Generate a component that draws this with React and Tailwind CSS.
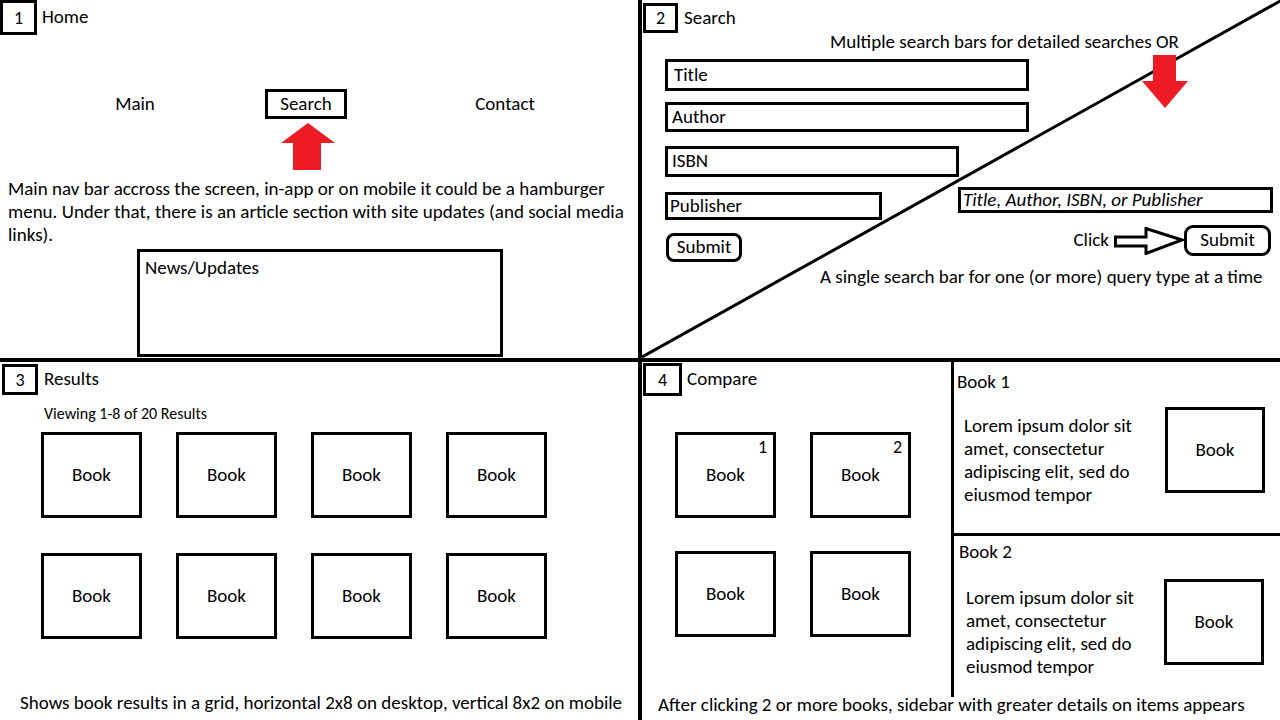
import React from "react";

function NumBox({ children, className }) {
  return (
    <div className={"border-[3px] border-black flex items-center justify-center text-[18px] leading-none " + className}>
      {children}
    </div>
  );
}

function Book({ label, num }) {
  return (
    <div className="relative w-[101px] h-[86px] border-[3px] border-black flex items-center justify-center text-[19px]">
      {label}
      {num && <span className="absolute right-[6px] top-[1px] text-[18px] leading-[22px]">{num}</span>}
    </div>
  );
}

function TopLeft() {
  return (
    <div className="w-[638px] h-[358px] flex flex-col shrink-0">
      <div className="flex items-center">
        <NumBox className="w-[37px] h-[35px]">1</NumBox>
        <span className="ml-[5px] text-[19px]">Home</span>
      </div>
      <div className="flex items-center mt-[54px] h-[30px] text-[19px]">
        <div className="ml-[95px] w-[80px] text-center">Main</div>
        <div className="ml-[90px] w-[82px] h-[30px] border-[3px] border-black flex items-center justify-center">Search</div>
        <div className="ml-[118px] w-[80px] text-center">Contact</div>
      </div>
      <svg className="ml-[281px] mt-[4px]" width="54" height="47" viewBox="0 0 54 47">
        <polygon points="27,0 54,20 40,20 40,47 12,47 12,20 0,20" fill="#ed1c24" />
      </svg>
      <p className="ml-[8px] mt-[7px] text-[19px] leading-[23px] whitespace-nowrap">
        Main nav bar accross the screen, in-app or on mobile it could be a hamburger
        <br />
        menu. Under that, there is an article section with site updates (and social media
        <br />
        links).
      </p>
      <div className="ml-[137px] mt-[3px] w-[366px] h-[108px] border-[3px] border-black px-[5px] pt-[4px] text-[19px] leading-[23px]">
        News/Updates
      </div>
    </div>
  );
}

function TopRight() {
  return (
    <div className="relative flex-1 h-[358px] flex flex-col">
      <svg className="absolute inset-0" width="638" height="358" viewBox="0 0 638 358">
        <line x1="0" y1="357" x2="640" y2="0" stroke="#000" strokeWidth="3" />
        <polygon points="11,0 34,0 34,26 46,26 23,53 0,26 11,26" fill="#ed1c24" transform="translate(500,55)" />
      </svg>
      <div className="relative flex items-center pt-[3px]">
        <NumBox className="ml-[1px] w-[35px] h-[30px]">2</NumBox>
        <span className="ml-[6px] text-[19px]">Search</span>
      </div>
      <div className="relative ml-[188px] -mt-[1px] text-[19px] leading-[20px] whitespace-nowrap">
        Multiple search bars for detailed searches OR
      </div>
      <div className="relative ml-[23px] mt-[7px] w-[364px] h-[32px] border-[3px] border-black bg-white pl-[6px] flex items-center text-[19px]">Title</div>
      <div className="relative ml-[23px] mt-[11px] w-[364px] h-[30px] border-[3px] border-black bg-white pl-[4px] flex items-center text-[19px]">Author</div>
      <div className="relative ml-[23px] mt-[14px] w-[294px] h-[31px] border-[3px] border-black bg-white pl-[4px] flex items-center text-[19px]">ISBN</div>
      <div className="relative flex mt-[10px]">
        <div className="ml-[23px] w-[293px] flex flex-col items-start">
          <div className="mt-[5px] w-[217px] h-[28px] border-[3px] border-black bg-white pl-[2px] flex items-center text-[19px]">Publisher</div>
          <div className="mt-[13px] ml-[1px] w-[76px] h-[29px] border-[3px] border-black rounded-[8px] bg-white flex items-center justify-center text-[19px]">Submit</div>
        </div>
        <div className="w-[315px] flex flex-col">
          <div className="w-[315px] h-[26px] border-[3px] border-black bg-white pl-[2px] flex items-center text-[19px] italic whitespace-nowrap">
            Title, Author, ISBN, or Publisher
          </div>
          <div className="flex items-center justify-end mt-[12px] mr-[2px]">
            <span className="text-[19px]">Click</span>
            <svg className="ml-[5px]" width="70" height="28" viewBox="0 0 70 28">
              <polygon points="1.5,10 32,10 32,1.5 68,13 32,26.5 32,19 1.5,19" fill="#fff" stroke="#000" strokeWidth="3" />
            </svg>
            <div className="w-[87px] h-[31px] border-[3px] border-black rounded-[9px] bg-white flex items-center justify-center text-[19px]">Submit</div>
          </div>
        </div>
      </div>
      <div className="relative ml-[178px] mt-[3px] text-[19px] leading-[23px] whitespace-nowrap">
        A single search bar for one (or more) query type at a time
      </div>
    </div>
  );
}

function BottomLeft() {
  return (
    <div className="w-[638px] h-[358px] flex flex-col shrink-0">
      <div className="flex items-center pt-[2px]">
        <NumBox className="ml-[2px] w-[36px] h-[31px]">3</NumBox>
        <span className="ml-[6px] text-[19px]">Results</span>
      </div>
      <div className="ml-[44px] mt-[10px] text-[16px] leading-[18px]">Viewing 1-8 of 20 Results</div>
      <div className="ml-[41px] mt-[9px] grid grid-cols-[101px_101px_101px_101px] gap-x-[34px] gap-y-[35px]">
        {Array.from({ length: 8 }).map((_, i) => (
          <Book key={i} label="Book" />
        ))}
      </div>
      <div className="ml-[20px] mt-[52px] text-[19px] leading-[23px] whitespace-nowrap">
        Shows book results in a grid, horizontal 2x8 on desktop, vertical 8x2 on mobile
      </div>
    </div>
  );
}

function Detail({ title, titleClass, rowClass, textClass }) {
  return (
    <>
      <div className={"text-[19px] leading-[23px] " + titleClass}>{title}</div>
      <div className={"flex items-start " + rowClass}>
        <p className={"text-[19px] leading-[23px] whitespace-nowrap " + textClass}>
          Lorem ipsum dolor sit
          <br />
          amet, consectetur
          <br />
          adipiscing elit, sed do
          <br />
          eiusmod tempor
        </p>
        <div className="w-[100px] h-[86px] border-[3px] border-black flex items-center justify-center text-[19px]">Book</div>
      </div>
    </>
  );
}

function BottomRight() {
  return (
    <div className="flex-1 h-[358px] flex flex-col">
      <div className="flex h-[335px]">
        <div className="w-[309px] flex flex-col">
          <div className="flex items-center pt-[1px]">
            <NumBox className="ml-[1px] w-[39px] h-[33px]">4</NumBox>
            <span className="ml-[5px] text-[19px]">Compare</span>
          </div>
          <div className="ml-[33px] mt-[36px] grid grid-cols-[101px_101px] gap-x-[34px] gap-y-[33px]">
            <Book label="Book" num="1" />
            <Book label="Book" num="2" />
            <Book label="Book" />
            <Book label="Book" />
          </div>
        </div>
        <div className="w-[3px] bg-black" />
        <div className="flex-1 flex flex-col">
          <div className="h-[171px] flex flex-col">
            <Detail title="Book 1" titleClass="pl-[3px] pt-[8px]" rowClass="mt-[14px]" textClass="ml-[10px] w-[201px] mt-[7px]" />
          </div>
          <div className="h-[3px] bg-black" />
          <div className="flex-1 flex flex-col">
            <Detail title="Book 2" titleClass="pl-[5px] pt-[4px]" rowClass="mt-[16px]" textClass="ml-[12px] w-[198px] mt-[7px]" />
          </div>
        </div>
      </div>
      <div className="ml-[16px] -mt-[4px] text-[19px] leading-[23px] whitespace-nowrap">
        After clicking 2 or more books, sidebar with greater details on items appears
      </div>
    </div>
  );
}

export default function App() {
  return (
    <div className="w-[1280px] h-[720px] overflow-hidden bg-white text-black font-['Carlito','Lato',sans-serif] flex flex-col">
      <div className="flex h-[358px]">
        <TopLeft />
        <div className="w-[4px] bg-black" />
        <TopRight />
      </div>
      <div className="h-[4px] bg-black" />
      <div className="flex h-[358px]">
        <BottomLeft />
        <div className="w-[4px] bg-black" />
        <BottomRight />
      </div>
    </div>
  );
}
